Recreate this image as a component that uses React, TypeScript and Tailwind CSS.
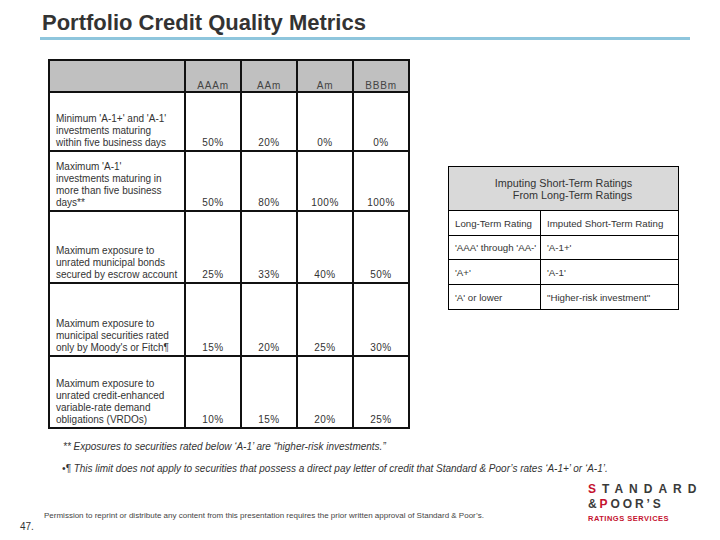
const rows = [
  { label: ["Minimum 'A-1+' and 'A-1'", "investments maturing", "within five business days"], values: ["50%", "20%", "0%", "0%"] },
  { label: ["Maximum 'A-1'", "investments maturing in", "more than five business", "days**"], values: ["50%", "80%", "100%", "100%"] },
  { label: ["Maximum exposure to", "unrated municipal bonds", "secured by escrow account"], values: ["25%", "33%", "40%", "50%"] },
  { label: ["Maximum exposure to", "municipal securities rated", "only by Moody's or Fitch¶"], values: ["15%", "20%", "25%", "30%"] },
  { label: ["Maximum exposure to", "unrated credit-enhanced", "variable-rate demand", "obligations (VRDOs)"], values: ["10%", "15%", "20%", "25%"] },
];

const imputed = [
  ["Long-Term Rating", "Imputed Short-Term Rating"],
  ["'AAA' through 'AA-'", "'A-1+'"],
  ["'A+'", "'A-1'"],
  ["'A' or lower", "\"Higher-risk investment\""],
];

export default function App() {
  return (
    <div className="h-[540px] w-[720px] overflow-hidden bg-white font-['Liberation_Sans',Arial,sans-serif] text-[#333]">
      <h1 className="pl-[42px] pt-[10px] text-[22px] font-bold leading-[26px] text-[#333]">Portfolio Credit Quality Metrics</h1>
      <div className="ml-[40px] mt-[1px] h-[3px] w-[650px] bg-[#8ec6dd]" />

      <div className="flex items-start">
        <div className="ml-[48px] mt-[19px] grid grid-cols-[134px_54px_54px_54px_54px] grid-rows-[30px_57px_58px_70px_71px_70px] gap-[2px] bg-[#111] p-[2px] text-[10px] leading-[12px]">
          <div className="bg-[#c0c0c0]" />
          {["AAAm", "AAm", "Am", "BBBm"].map((h) => (
            <div key={h} className="flex items-end justify-center bg-[#c0c0c0] leading-[11px] tracking-[0.8px] text-[#444]">
              {h}
            </div>
          ))}
          {rows.map((r, i) => (
            <Row key={i} label={r.label} values={r.values} />
          ))}
        </div>

        <div className="ml-[38px] mt-[126px] grid grid-cols-[91px_137px] grid-rows-[43px_24px_23px_24px_24px] gap-px bg-black p-px text-[9.7px] leading-[11px]">
          <div className="col-span-2 flex flex-col items-center justify-center bg-[#d9d9d9] text-[10.8px] leading-[12px]">
            <span>Imputing Short-Term Ratings</span>
            <span className="pl-[18px]">From Long-Term Ratings</span>
          </div>
          {imputed.map(([a, b]) => (
            <>
              <div key={a} className="flex items-center bg-white pl-[6px]">{a}</div>
              <div key={b} className="flex items-center bg-white pl-[6px]">{b}</div>
            </>
          ))}
        </div>
      </div>

      <div className="pl-[63px] text-[10px] italic leading-[12px] text-[#333]">
        <p className="mt-[12px]">** Exposures to securities rated below ‘A-1’ are “higher-risk investments.”</p>
        <p className="mt-[10px] -ml-px">•¶ This limit does not apply to securities that possess a direct pay letter of credit that Standard &amp; Poor’s rates ‘A-1+’ or ‘A-1’.</p>
      </div>

      <div className="flex items-start pl-[20px]">
        <div className="mt-[46px] w-[24px] text-[10px] leading-[12px]">47.</div>
        <div className="mt-[36px] w-[542px] text-[8px] leading-[9px] text-[#444]">
          Permission to reprint or distribute any content from this presentation requires the prior written approval of Standard &amp; Poor’s.
        </div>
        <SpLogo />
      </div>
    </div>
  );
}

function Row({ label, values }: { label: string[]; values: string[] }) {
  return (
    <>
      <div className="flex flex-col justify-end bg-white pb-px pl-[6px]">
        {label.map((l) => (
          <span key={l}>{l}</span>
        ))}
      </div>
      {values.map((v, i) => (
        <div key={i} className="flex items-end justify-center bg-white pb-px tracking-[0.5px]">
          {v}
        </div>
      ))}
    </>
  );
}

function SpLogo() {
  return (
    <div className="mt-[7px] ml-[2px] font-bold text-[#3a3a3a]">
      <div className="text-[12px] leading-[15px] tracking-[6px]">
        <span className="text-[#c4122f]">S</span>TANDARD
      </div>
      <div className="text-[12px] leading-[15px] tracking-[2.9px]">
        &amp;<span className="text-[#c4122f]">P</span>OOR’S
      </div>
      <div className="mt-[2px] text-[7.5px] leading-[10px] tracking-[0.5px] text-[#c4122f]">RATINGS SERVICES</div>
    </div>
  );
}
